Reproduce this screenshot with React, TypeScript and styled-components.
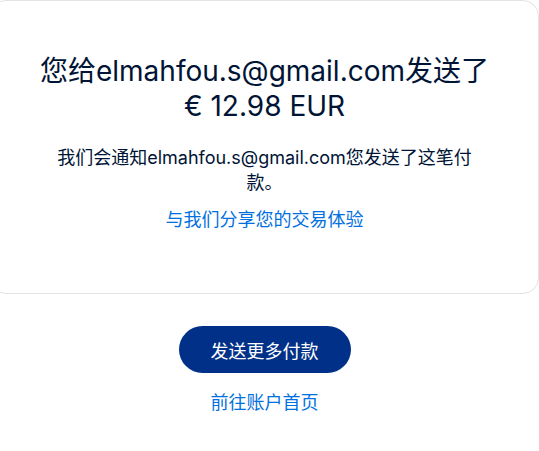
import styled, { createGlobalStyle } from "styled-components";

const GlobalStyle = createGlobalStyle`
  html, body {
    margin: 0;
    padding: 0;
    background: #ffffff;
    overflow: hidden;
  }
  body {
    font-family: Inter, "Noto Sans CJK SC", sans-serif;
    color: #001435;
  }
`;

const Page = styled.div`
  width: 549px;
  margin-left: -10px;
  display: flex;
  flex-direction: column;
  align-items: center;
`;

const Card = styled.section`
  box-sizing: border-box;
  width: 100%;
  height: 294px;
  border: 1px solid #e3e3e3;
  border-radius: 16px;
  padding: 53px 40px 0;
  display: flex;
  flex-direction: column;
  align-items: center;
  text-align: center;
`;

const Heading = styled.h1`
  margin: 0;
  font-size: 28px;
  font-weight: 400;
  line-height: 35px;
  color: #001435;
`;

const Body = styled.p`
  margin: 21px 0 0;
  max-width: 420px;
  font-size: 18px;
  line-height: 25px;
  color: #001435;
`;

const Link = styled.a<{ $gap?: number }>`
  display: block;
  margin-top: ${(p) => p.$gap ?? 13}px;
  font-size: 18px;
  line-height: 24px;
  color: #0070e0;
  text-decoration: none;
  cursor: pointer;
`;

const Actions = styled.div`
  margin-top: 32px;
  display: flex;
  flex-direction: column;
  align-items: center;
`;

const PrimaryButton = styled.button`
  box-sizing: border-box;
  width: 172px;
  height: 47px;
  border: none;
  border-radius: 24px;
  background: #003087;
  color: #ffffff;
  font-family: Inter, "Noto Sans CJK SC", sans-serif;
  font-size: 18px;
  cursor: pointer;
`;

export default function App() {
  return (
    <>
      <GlobalStyle />
      <Page>
        <Card>
          <Heading>
            您给elmahfou.s@gmail.com发送了
            <br />€ 12.98 EUR
          </Heading>
          <Body>我们会通知elmahfou.s@gmail.com您发送了这笔付款。</Body>
          <Link>与我们分享您的交易体验</Link>
        </Card>
        <Actions>
          <PrimaryButton>发送更多付款</PrimaryButton>
          <Link $gap={18}>前往账户首页</Link>
        </Actions>
      </Page>
    </>
  );
}
